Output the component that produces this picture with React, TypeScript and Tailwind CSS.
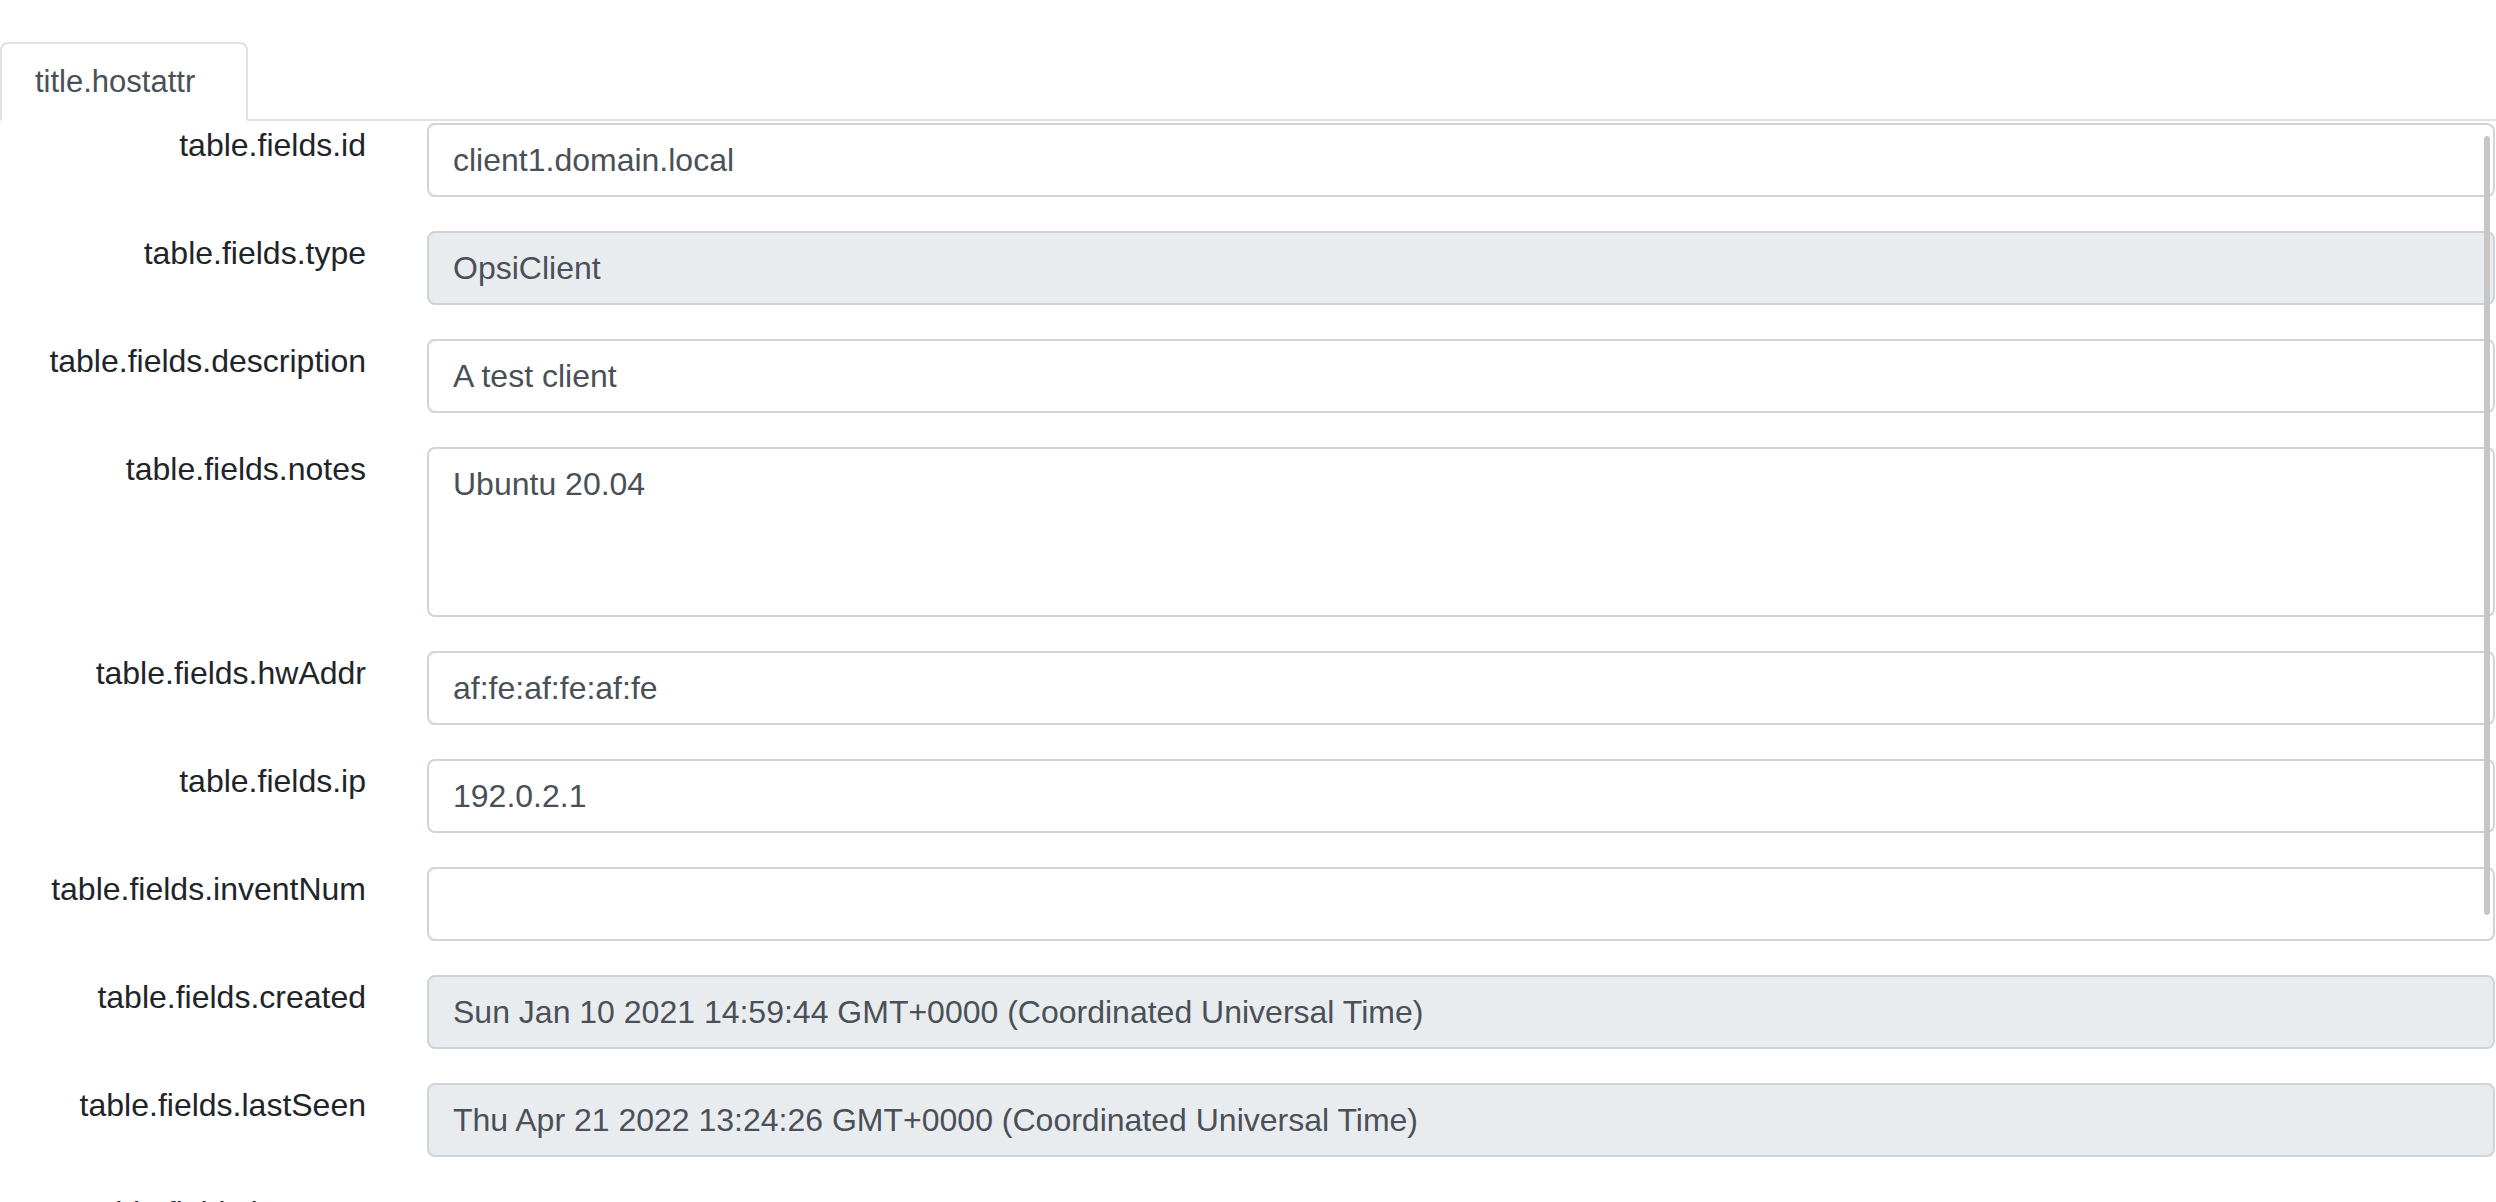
import React from "react";

type Field = {
  name: string;
  value: string;
  disabled?: boolean;
  multiline?: boolean;
  labelOnly?: boolean;
};

const fields: Field[] = [
  { name: "id", value: "client1.domain.local" },
  { name: "type", value: "OpsiClient", disabled: true },
  { name: "description", value: "A test client" },
  { name: "notes", value: "Ubuntu 20.04", multiline: true },
  { name: "hwAddr", value: "af:fe:af:fe:af:fe" },
  { name: "ip", value: "192.0.2.1" },
  { name: "inventNum", value: "" },
  {
    name: "created",
    value: "Sun Jan 10 2021 14:59:44 GMT+0000 (Coordinated Universal Time)",
    disabled: true,
  },
  {
    name: "lastSeen",
    value: "Thu Apr 21 2022 13:24:26 GMT+0000 (Coordinated Universal Time)",
    disabled: true,
  },
  { name: "hostKey", value: "", labelOnly: true },
];

function FieldRow({ field }: { field: Field }) {
  const base =
    "block w-full rounded-[8px] border-2 border-[#ced4da] px-[24px] py-[11px] text-[32px] leading-[48px] text-[#495057] outline-none";
  const bg = field.disabled ? "bg-[#e9ecef]" : "bg-white";

  return (
    <div className="mb-[34px] flex items-start">
      <label className="w-[366px] shrink-0 text-right text-[32px] leading-[44px] text-[#212529]">
        table.fields.{field.name}
      </label>
      <div className="ml-[61px] mr-[1px] flex-1">
        {field.labelOnly ? null : field.multiline ? (
          <textarea
            readOnly
            value={field.value}
            className={`${base} ${bg} h-[170px] resize-none`}
          />
        ) : (
          <input
            readOnly
            disabled={field.disabled}
            value={field.value}
            className={`${base} ${bg} h-[74px]`}
          />
        )}
      </div>
    </div>
  );
}

export default function App() {
  return (
    <div className="relative h-screen overflow-hidden bg-white font-['Liberation_Sans',Arial,sans-serif]">
      <div className="pt-[42px]">
        {/* tab bar */}
        <div className="flex h-[79px] border-b-2 border-[#dee2e6]">
          <div className="-mb-[2px] flex h-[79px] w-[248px] items-center rounded-t-[8px] border-2 border-[#dee2e6] border-b-white bg-white pl-[33px] pt-[1px] text-[31px] leading-[48px] text-[#495057]">
            title.hostattr
          </div>
        </div>

        {/* host attributes form */}
        <div className="pt-[2px]">
          {fields.map((f) => (
            <FieldRow key={f.name} field={f} />
          ))}
        </div>
      </div>

      {/* overlay scrollbar */}
      <div className="absolute left-[2484px] top-[136px] h-[779px] w-[6px] rounded-[3px] bg-[#c6c6c6]" />
    </div>
  );
}
